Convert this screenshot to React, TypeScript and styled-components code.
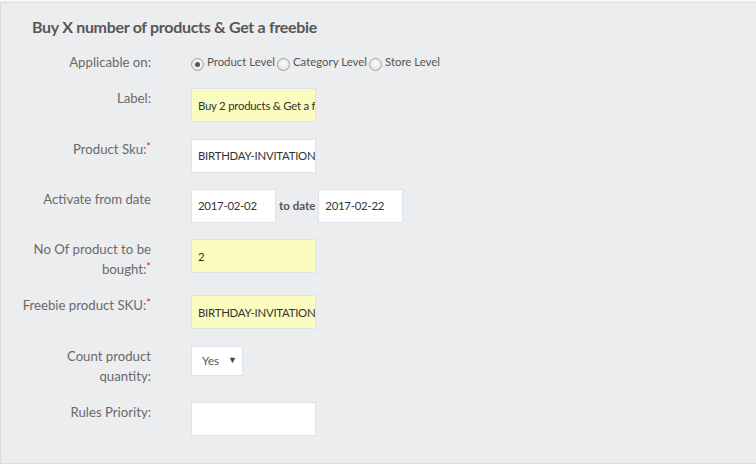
import styled, { createGlobalStyle } from "styled-components";

const GlobalStyle = createGlobalStyle`
  html, body {
    margin: 0;
    padding: 0;
    background: #f5f5f6;
  }
  body {
    font-family: Lato, "Open Sans", sans-serif;
  }
`;

const Panel = styled.div`
  margin-top: 2px;
  width: 780px;
  height: 462px;
  box-sizing: border-box;
  background: #ecedef;
  border: 1px solid #dcdddf;
  padding: 14px 0 0 31px;
  overflow: hidden;
`;

const Title = styled.h3`
  margin: 0 0 15px;
  font-size: 16px;
  font-weight: 700;
  color: #575757;
  line-height: 20px;
  letter-spacing: -0.3px;
`;

const Form = styled.div`
  display: flex;
  flex-direction: column;
  gap: 16.3px;
`;

const Row = styled.div`
  display: grid;
  grid-template-columns: 120px 1fr;
  column-gap: 39px;
  align-items: start;
`;

const Label = styled.div`
  margin-left: -31px;
  width: 150px;
  text-align: right;
  font-size: 13.2px;
  line-height: 20px;
  color: #6a6a6a;
`;

const Req = styled.span`
  color: #e0262b;
  font-size: 11px;
  vertical-align: top;
  position: relative;
  top: -2px;
`;

const Field = styled.div<{ $w?: number; $yellow?: boolean }>`
  width: ${(p) => p.$w ?? 125}px;
  height: 34px;
  box-sizing: border-box;
  border: 1px solid #dde3ea;
  background: ${(p) => (p.$yellow ? "#fafcc0" : "#ffffff")};
  font-family: Lato, sans-serif;
  font-size: 11.4px;
  letter-spacing: -0.25px;
  color: #333;
  padding: 0 6px;
  display: flex;
  align-items: center;
  white-space: nowrap;
  overflow: hidden;
`;

const Radios = styled.div`
  display: flex;
  align-items: center;
  font-size: 11.4px;
  color: #555;
  line-height: 20px;
`;

const Radio = styled.span<{ $on?: boolean }>`
  display: inline-block;
  width: 11px;
  height: 11px;
  border-radius: 50%;
  border: 1px solid #a0a0a0;
  background: radial-gradient(circle at 50% 40%, #fdfdfd, #dcdcdc);
  margin: 4px 3px 0 0;
  position: relative;
  &::after {
    content: "";
    display: ${(p) => (p.$on ? "block" : "none")};
    position: absolute;
    left: 3px;
    top: 3px;
    width: 5px;
    height: 5px;
    border-radius: 50%;
    background: #555;
  }
`;

const RadioText = styled.span`
  margin-right: 2px;
`;

const Dates = styled.div`
  display: flex;
  align-items: center;
  gap: 3px;
`;

const ToDate = styled.span`
  font-size: 11.5px;
  font-weight: 700;
  color: #555;
`;

const Select = styled.div`
  width: 52px;
  height: 30px;
  box-sizing: border-box;
  border: 1px solid #dde3ea;
  background: #fff;
  display: flex;
  align-items: center;
  justify-content: space-between;
  padding: 0 5px 0 10px;
  font-family: Lato, sans-serif;
  font-size: 11.6px;
  color: #555;
`;

const Arrow = styled.span`
  font-size: 9px;
  color: #444;
  margin-top: -2px;
`;

export default function App() {
  return (
    <>
      <GlobalStyle />
      <Panel>
        <Title>Buy X number of products &amp; Get a freebie</Title>
        <Form>
          <Row>
            <Label>Applicable on:</Label>
            <Radios>
              <Radio $on />
              <RadioText>Product Level</RadioText>
              <Radio />
              <RadioText>Category Level</RadioText>
              <Radio />
              <RadioText>Store Level</RadioText>
            </Radios>
          </Row>
          <Row>
            <Label>Label:</Label>
            <Field $yellow>Buy 2 products &amp; Get a freebie</Field>
          </Row>
          <Row>
            <Label>
              Product Sku:<Req>*</Req>
            </Label>
            <Field>BIRTHDAY-INVITATION</Field>
          </Row>
          <Row>
            <Label>Activate from date</Label>
            <Dates>
              <Field $w={85}>2017-02-02</Field>
              <ToDate>to date</ToDate>
              <Field $w={85}>2017-02-22</Field>
            </Dates>
          </Row>
          <Row>
            <Label>
              No Of product to be
              <br />
              bought:<Req>*</Req>
            </Label>
            <Field $yellow>2</Field>
          </Row>
          <Row>
            <Label>
              Freebie product SKU:<Req>*</Req>
            </Label>
            <Field $yellow>BIRTHDAY-INVITATION</Field>
          </Row>
          <Row>
            <Label>
              Count product
              <br />
              quantity:
            </Label>
            <Select>
              Yes<Arrow>▼</Arrow>
            </Select>
          </Row>
          <Row>
            <Label>Rules Priority:</Label>
            <Field />
          </Row>
        </Form>
      </Panel>
    </>
  );
}
